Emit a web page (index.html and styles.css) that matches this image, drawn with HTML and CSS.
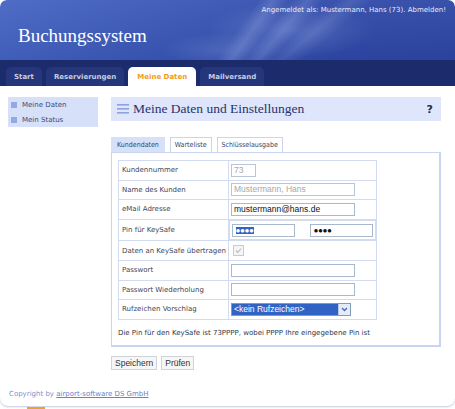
FILE: index.html
```html
<!DOCTYPE html>
<html lang="de">
<head>
<meta charset="utf-8">
<title>Buchungssystem</title>
<link rel="stylesheet" href="styles.css">
</head>
<body>
<div class="page">
  <div class="header">
    <div class="login">Angemeldet als: Mustermann, Hans (73). <a href="#">Abmelden!</a></div>
    <div class="brand">Buchungssystem</div>
  </div>
  <div class="nav">
    <a class="navtab" href="#">Start</a>
    <a class="navtab" href="#">Reservierungen</a>
    <a class="navtab active" href="#">Meine Daten</a>
    <a class="navtab" href="#">Mailversand</a>
  </div>
  <div class="content">
    <div class="sidebar">
      <div class="sideitem"><span class="bullet"></span>Meine Daten</div>
      <div class="sideitem"><span class="bullet"></span>Mein Status</div>
    </div>
    <div class="main">
      <div class="heading">
        <svg class="menu" width="12" height="10" viewBox="0 0 12 10"><rect x="0" y="0" width="12" height="1.6" fill="#8ea2de"/><rect x="0" y="4" width="12" height="1.6" fill="#8ea2de"/><rect x="0" y="8" width="12" height="1.6" fill="#8ea2de"/></svg>
        <span class="htitle">Meine Daten und Einstellungen</span>
        <span class="help">?</span>
      </div>
      <div class="tabs">
        <span class="tab active">Kundendaten</span>
        <span class="tab">Warteliste</span>
        <span class="tab">Schlüsselausgabe</span>
      </div>
      <div class="panel">
        <table class="form">
          <tr><td class="lbl">Kundennummer</td><td class="val"><div class="inp dis w25">73</div></td></tr>
          <tr><td class="lbl">Name des Kunden</td><td class="val"><div class="inp dis w123">Mustermann, Hans</div></td></tr>
          <tr><td class="lbl">eMail Adresse</td><td class="val"><div class="inp w123">mustermann@hans.de</div></td></tr>
          <tr><td class="lbl">Pin für KeySafe</td><td class="val pins"><div class="inp w63 dots"><span class="sel">●●●●</span></div><div class="inp w63 dots">●●●●</div></td></tr>
          <tr><td class="lbl">Daten an KeySafe übertragen</td><td class="val"><span class="chk"><svg width="9" height="9" viewBox="0 0 9 9"><path d="M2 4.5 L3.8 6.5 L7 2.5" fill="none" stroke="#b8c0c8" stroke-width="1.2"/></svg></span></td></tr>
          <tr><td class="lbl">Passwort</td><td class="val"><div class="inp w123"></div></td></tr>
          <tr><td class="lbl">Passwort Wiederholung</td><td class="val"><div class="inp w123"></div></td></tr>
          <tr><td class="lbl">Rufzeichen Vorschlag</td><td class="val"><div class="select"><span class="seltext">&lt;kein Rufzeichen&gt;</span><span class="arrow"><svg width="7" height="5" viewBox="0 0 7 5"><path d="M1 1 L3.5 3.5 L6 1" fill="none" stroke="#4a6aa8" stroke-width="1.3"/></svg></span></div></td></tr>
        </table>
        <p class="note">Die Pin für den KeySafe ist 73PPPP, wobei PPPP Ihre eingegebene Pin ist</p>
      </div>
      <div class="buttons">
        <span class="btn">Speichern</span>
        <span class="btn">Prüfen</span>
      </div>
    </div>
  </div>
  <div class="footer">Copyright by <a href="#">airport-software DS GmbH</a></div>
</div>
<div class="orange"></div>
</body>
</html>
```
FILE: styles.css
```css
html, body { margin: 0; padding: 0; background: #ffffff; }
body { font-family: "DejaVu Sans", Verdana, sans-serif; font-size: 8px; color: #333; }
.page {
  width: 455px;
  height: 406px;
  box-sizing: border-box;
  border-radius: 7px 7px 8px 8px;
  box-shadow: 0 1px 2px rgba(150,165,200,0.6);
  overflow: hidden;
  display: flex;
  flex-direction: column;
}
.header {
  height: 60px;
  box-sizing: border-box;
  border-radius: 6px 6px 0 0;
  background:
    linear-gradient(125deg, rgba(255,255,255,0) 52%, rgba(200,215,255,0.18) 55%, rgba(255,255,255,0) 58%),
    linear-gradient(130deg, rgba(255,255,255,0) 58%, rgba(200,215,255,0.16) 61%, rgba(255,255,255,0) 64%),
    linear-gradient(140deg, rgba(255,255,255,0) 64%, rgba(200,215,255,0.12) 67%, rgba(255,255,255,0) 71%),
    radial-gradient(ellipse 120px 40px at 290px 30px, rgba(170,190,240,0.25), rgba(170,190,240,0) 70%),
    radial-gradient(ellipse 90px 25px at 225px 50px, rgba(160,180,240,0.22), rgba(160,180,240,0) 70%),
    linear-gradient(180deg, rgba(255,255,255,0.06), rgba(0,0,0,0.05)),
    linear-gradient(90deg, #4463c2 0%, #3a58b8 30%, #3552b2 50%, #2e48a8 75%, #2c46a4 100%);
  padding: 5px 9px 0 18px;
  display: flex;
  flex-direction: column;
}
.login {
  align-self: flex-end;
  color: #e8ecf8;
  font-size: 7px;
  line-height: 10px;
}
.login a { color: #e8ecf8; text-decoration: none; }
.brand {
  margin-top: 9px;
  font-family: "Liberation Serif", "Times New Roman", serif;
  font-size: 19px;
  color: #ffffff;
  line-height: 23px;
}
.nav {
  height: 26px;
  background: #1c2b6c;
  display: flex;
  align-items: flex-end;
  gap: 4px;
  padding-left: 6px;
  box-sizing: border-box;
}
.navtab {
  height: 19px;
  padding: 0 8px;
  border-radius: 5px 5px 0 0;
  background: #25367b;
  color: #c6cde6;
  font-weight: bold;
  font-size: 7px;
  line-height: 20px;
  text-decoration: none;
}
.navtab.active { background: #ffffff; color: #f59a1a; padding: 0 9px; }
.content {
  display: flex;
  padding: 11px 0 0 8px;
  flex: 1;
}
.sidebar {
  width: 90px;
  height: 30px;
  background: #d6e0f8;
  display: flex;
  flex-direction: column;
  justify-content: center;
  gap: 5px;
  padding-left: 3px;
  box-sizing: border-box;
}
.sideitem { display: flex; align-items: center; gap: 5px; color: #3b4a7a; font-size: 7px; line-height: 10px; }
.bullet { width: 6px; height: 6px; background: #94a8e2; display: inline-block; }
.main { margin-left: 13px; width: 330px; }
.heading {
  height: 24px;
  background: #dfe6fc;
  display: flex;
  align-items: center;
  padding: 0 8px 0 6px;
}
.menu { margin-right: 4px; }
.htitle {
  font-family: "Liberation Serif", "Times New Roman", serif;
  font-size: 13.5px;
  color: #26336e;
  flex: 1;
}
.help { font-weight: bold; color: #222a50; font-size: 11px; font-family: "DejaVu Sans", sans-serif; }
.tabs { display: flex; gap: 5px; margin-top: 16px; height: 15px; align-items: flex-end; }
.tab {
  height: 15px;
  box-sizing: border-box;
  border: 1px solid #c8d4f0;
  border-bottom: none;
  padding: 0 4px;
  font-family: "DejaVu Sans Condensed", "DejaVu Sans", sans-serif;
  font-stretch: condensed;
  font-size: 7px;
  line-height: 14px;
  color: #3b4560;
}
.tab.active { background: #d6e0f8; border-color: #d6e0f8; padding: 0 5px; }
.panel {
  border: 1px solid #c8d4f0;
  border-width: 1px 2px 2px 1px;
  height: 195px;
  box-sizing: border-box;
  padding: 7px 6px 0 6px;
}
.form {
  border-collapse: collapse;
  width: 259px;
  border: 1px solid #d2dbef;
}
.form td { border: 1px solid #d2dbef; height: 18.6px; padding: 0; font-size: 7px; color: #3d4558; }
.lbl { width: 106px; padding-left: 3px !important; }
.val { padding-left: 2px !important; }
.inp {
  height: 13px;
  box-sizing: border-box;
  border: 1px solid #a9b9c9;
  background: #fff;
  font-family: "Liberation Sans", Arial, sans-serif;
  font-size: 8.5px;
  line-height: 11px;
  padding-left: 2px;
  color: #111;
  overflow: hidden;
  white-space: nowrap;
}
.inp.dis { color: #a8a8a8; border-color: #b9c6d4; }
.w25 { width: 25px; }
.w123 { width: 124px; }
.w63 { width: 63px; }
.pins { display: flex; align-items: center; gap: 15px; height: 18.6px; }
.dots { font-family: "DejaVu Sans", sans-serif; font-size: 4.5px; line-height: 11px; letter-spacing: 0.6px; padding-left: 3px; color: #111; }
.sel { background: #3163c5; color: #fff; padding: 1px 0; }
.chk {
  display: inline-block;
  width: 9px; height: 9px;
  border: 1px solid #c6ccd4;
  background: #f4f5f6;
  margin-left: 2px;
  vertical-align: middle;
}
.chk svg { display: block; }
.select {
  width: 120px;
  height: 13px;
  box-sizing: border-box;
  border: 1px solid #7f9db9;
  background: #3163c5;
  display: flex;
  align-items: center;
  font-family: "Liberation Sans", Arial, sans-serif;
  font-size: 8.5px;
  color: #fff;
}
.seltext { flex: 1; padding-left: 2px; }
.arrow {
  width: 11px; height: 11px;
  background: #e4ecfb;
  border-left: 1px solid #b8c8e8;
  display: flex; align-items: center; justify-content: center;
}
.note { margin: 8px 0 0 0; font-size: 7px; color: #2f3848; line-height: 10px; }
.buttons { display: flex; gap: 4px; margin-top: 9px; }
.btn {
  height: 14px;
  box-sizing: border-box;
  border: 1px solid #cfd4dc;
  background: #f6f6f6;
  padding: 0 3px;
  font-family: "Liberation Sans", Arial, sans-serif;
  font-size: 8.5px;
  line-height: 12px;
  color: #333;
}
.footer {
  padding: 0 0 8px 9px;
  font-size: 7px;
  color: #7f90cc;
}
.footer a { color: #6d80c4; }
.orange { width: 18px; height: 2px; background: #f0a030; margin-left: 27px; margin-top: 1px; }
```
